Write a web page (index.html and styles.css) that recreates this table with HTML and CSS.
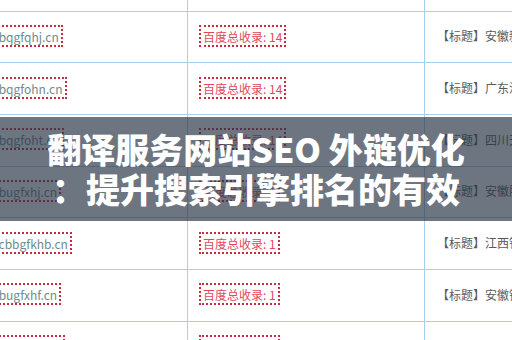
FILE: index.html
```html
<!DOCTYPE html>
<html lang="zh">
<head>
<meta charset="utf-8">
<link rel="stylesheet" href="styles.css">
</head>
<body>
<div class="page">
  <div class="table">
    <div class="row">
      <div class="c1"></div><div class="c2"></div><div class="c3"></div>
    </div>
    <div class="row">
      <div class="c1"><span class="dom">www.bqgfqhj.cn</span></div>
      <div class="c2"><span class="rec">百度总收录: 14</span></div>
      <div class="c3"><span class="tit">【标题】安徽新能源科技有限公司</span></div>
    </div>
    <div class="row">
      <div class="c1"><span class="dom">www.bqgfohn.cn</span></div>
      <div class="c2"><span class="rec">百度总收录: 14</span></div>
      <div class="c3"><span class="tit">【标题】广东汽车配件有限公司</span></div>
    </div>
    <div class="row">
      <div class="c1"><span class="dom">www.bqgfoht.cn</span></div>
      <div class="c2"><span class="rec">百度总收录: 14</span></div>
      <div class="c3"><span class="tit">【标题】四川天府科技有限公司</span></div>
    </div>
    <div class="row">
      <div class="c1"><span class="dom">www.bugfxhj.cn</span></div>
      <div class="c2"><span class="rec">百度总收录: 1</span></div>
      <div class="c3"><span class="tit">【标题】安徽股份有限公司</span></div>
    </div>
    <div class="row">
      <div class="c1"><span class="dom">www.cbbgfkhb.cn</span></div>
      <div class="c2"><span class="rec">百度总收录: 1</span></div>
      <div class="c3"><span class="tit">【标题】江西铁路有限公司</span></div>
    </div>
    <div class="row">
      <div class="c1"><span class="dom">www.bugfxhf.cn</span></div>
      <div class="c2"><span class="rec">百度总收录: 1</span></div>
      <div class="c3"><span class="tit">【标题】安徽锐科技有限公司</span></div>
    </div>
    <div class="row">
      <div class="c1"><span class="dom">www.bugfxhk.cn</span></div>
      <div class="c2"><span class="rec">百度总收录: 1</span></div>
      <div class="c3"><span class="tit">【标题】安徽科技有限公司</span></div>
    </div>
  </div>
  <div class="band">
    <h1 class="title">翻译服务网站SEO 外链优化<br>：提升搜索引擎排名的有效</h1>
  </div>
</div>
</body>
</html>
```

FILE: styles.css
```css
* { box-sizing: border-box; }
html, body { margin: 0; padding: 0; background: #fff; }
body {
  width: 512px;
  height: 340px;
  overflow: hidden;
  font-family: "Noto Sans CJK SC", "Liberation Sans", sans-serif;
}
.page { position: relative; width: 512px; height: 340px; overflow: hidden; }
.table {
  margin-top: -40px;
  margin-left: -60px;
  width: 700px;
}
.row {
  display: flex;
  height: 51.67px;
  border-bottom: 1px solid #a9d0ea;
}
.c1, .c2, .c3 {
  display: flex;
  align-items: center;
  padding-bottom: 2px;
}
.c1 {
  width: 248px;
  border-right: 1px solid #a9d0ea;
  padding-left: 23px;
}
.c2 {
  width: 237px;
  border-right: 1px solid #a9d0ea;
  padding-left: 11px;
}
.c3 {
  flex: 1;
  padding-left: 12px;
}
.dom, .rec {
  display: inline-block;
  height: 22px;
  line-height: 20px;
  padding: 0 2px;
  border: 2px dotted #c92b3e;
  font-size: 12px;
  white-space: nowrap;
}
.dom { color: #6e8c8e; }
.rec { color: #e2475b; }
.tit {
  font-size: 12px;
  color: #5a5a5a;
  white-space: nowrap;
}
.band {
  position: absolute;
  left: 0;
  top: 117px;
  width: 512px;
  height: 104px;
  background: rgba(40, 52, 70, 0.68);
  display: flex;
  align-items: center;
  justify-content: center;
}
.title {
  margin: 0;
  color: #fff;
  font-size: 34px;
  font-weight: 900;
  line-height: 40px;
  text-align: center;
  white-space: nowrap;
}
```
